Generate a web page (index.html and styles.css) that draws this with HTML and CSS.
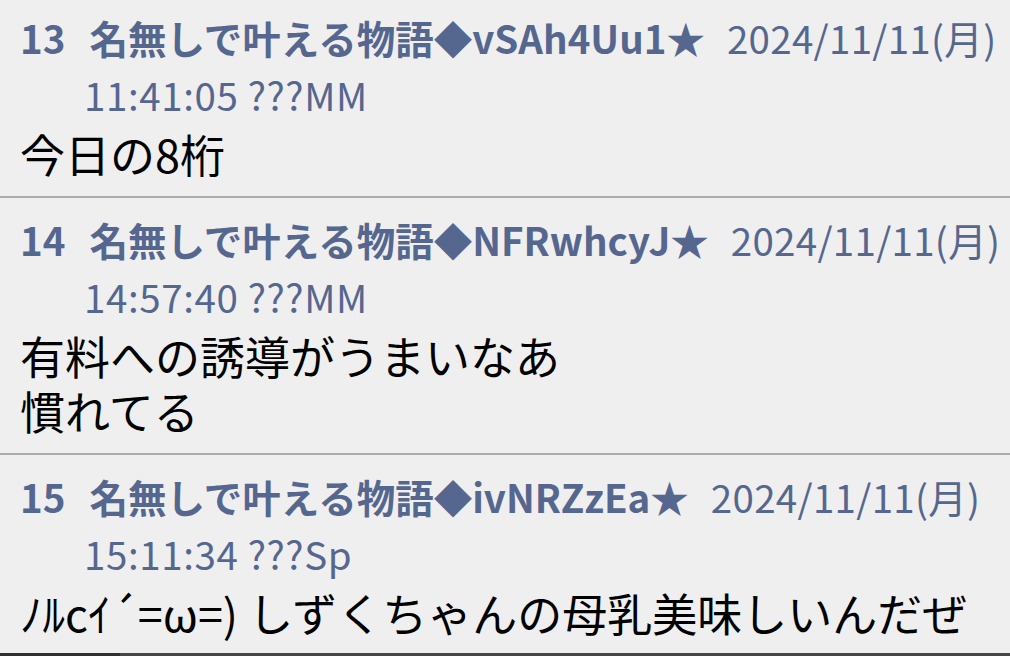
FILE: index.html
```html
<!DOCTYPE html>
<html lang="ja">
  <head>
    <meta charset="UTF-8" />
    <meta name="viewport" content="width=device-width, initial-scale=1.0" />
    <title>名無しで叶える物語</title>
    <link rel="stylesheet" href="styles.css">
  </head>
  <body>
    <div class="thread">
      <div class="post">
        <div class="post-head">
          <span class="num">13</span><span class="name">名無しで叶える物語◆vSAh4Uu1★</span><span class="date">2024/11/11(月)</span> <span class="time">11:41:05 ???MM</span>
        </div>
        <div class="post-body">今日の8桁</div>
      </div>
      <div class="post">
        <div class="post-head">
          <span class="num">14</span><span class="name">名無しで叶える物語◆NFRwhcyJ★</span><span class="date">2024/11/11(月)</span> <span class="time">14:57:40 ???MM</span>
        </div>
        <div class="post-body">有料への誘導がうまいなあ<br />慣れてる</div>
      </div>
      <div class="post">
        <div class="post-head">
          <span class="num">15</span><span class="name">名無しで叶える物語◆ivNRZzEa★</span><span class="date">2024/11/11(月)</span> <span class="time">15:11:34 ???Sp</span>
        </div>
        <div class="post-body">ﾉﾙcｲ´=ω=) しずくちゃんの母乳美味しいんだぜ</div>
      </div>
    </div>
    <div class="bottom-bar">
      <div class="bottom-bar-left"></div>
    </div>
  </body>
</html>
```

FILE: styles.css
```css
* {
  box-sizing: border-box;
  font-family: "Noto Sans CJK JP", "Noto Sans", sans-serif;
}
html,
body {
  margin: 0;
  padding: 0;
  background-color: #efefef;
  overflow: hidden;
}
.thread {
  margin-top: -4px;
}
.post {
  padding: 13px 0 15px 20px;
  border-bottom: 2px solid #acacac;
}
.post:last-child {
  border-bottom: none;
  padding-bottom: 13px;
}
.post-head {
  color: #56678f;
  font-size: 38.5px;
  line-height: 57px;
  padding-left: 64px;
  text-indent: -64px;
}
.num {
  font-weight: 700;
  margin-right: 24px;
}
.name {
  font-weight: 700;
  margin-right: 22px;
  white-space: nowrap;
}
.date {
  white-space: nowrap;
  letter-spacing: 0.3px;
}
.time {
  white-space: nowrap;
  letter-spacing: 0.6px;
}
.post-body {
  margin-top: 3px;
  color: #000;
  font-size: 45px;
  line-height: 55px;
}
.bottom-bar {
  display: flex;
  height: 10px;
  background-color: #464646;
}
.bottom-bar-left {
  width: 120px;
  background-color: #2f2f2f;
}
```
